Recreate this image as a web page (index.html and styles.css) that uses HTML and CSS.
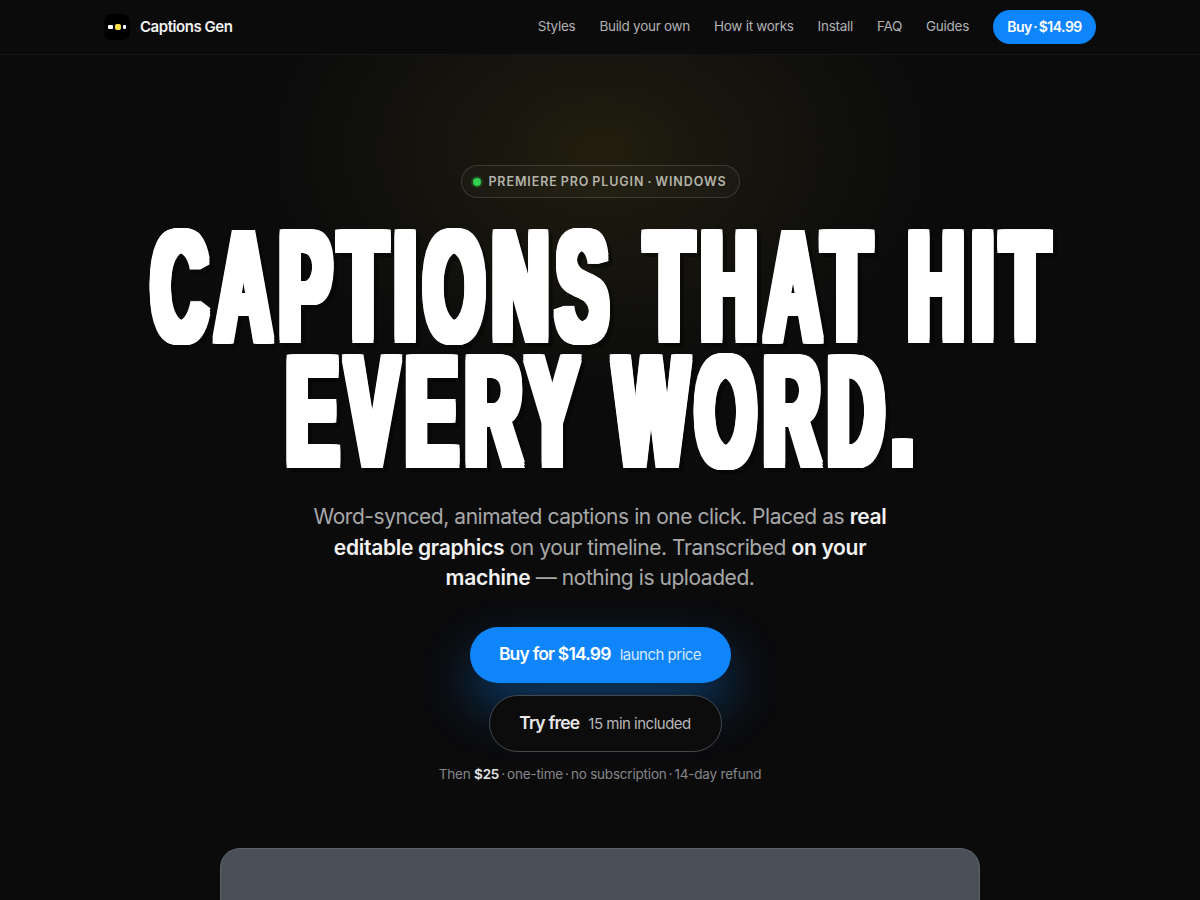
FILE: index.html
```html
<!DOCTYPE html>
<html lang="en">
<head>
<meta charset="utf-8">
<title>Captions Gen</title>
<link rel="stylesheet" href="styles.css">
</head>
<body>
<header class="nav">
  <div class="nav-inner">
    <a class="brand" href="#">
      <span class="logo"><i class="dot"></i><i class="dot yellow"></i><i class="dot small"></i></span>
      <span class="brand-name">Captions Gen</span>
    </a>
    <nav class="links">
      <a href="#">Styles</a>
      <a href="#">Build your own</a>
      <a href="#">How it works</a>
      <a href="#">Install</a>
      <a href="#">FAQ</a>
      <a href="#">Guides</a>
      <a class="nav-buy" href="#">Buy · $14.99</a>
    </nav>
  </div>
</header>
<main class="hero">
  <div class="badge"><span class="pulse"></span>PREMIERE PRO PLUGIN · WINDOWS</div>
  <h1 class="title">
    <span class="line"><span class="ink">CAPTIONS THAT HIT</span></span>
    <span class="line"><span class="ink">EVERY WORD.</span></span>
  </h1>
  <p class="lede">Word-synced, animated captions in one click. Placed as <b>real editable graphics</b> on your timeline. Transcribed <b>on your machine</b> — nothing is uploaded.</p>
  <div class="cta">
    <a class="btn primary" href="#"><strong>Buy for $14.99</strong><span>launch price</span></a>
    <a class="btn ghost" href="#"><strong>Try free</strong><span>15 min included</span></a>
  </div>
  <p class="note">Then <b>$25</b> <i class="sep">·</i> one-time <i class="sep">·</i> no subscription <i class="sep">·</i> 14-day refund</p>
  <div class="panel"></div>
</main>
</body>
</html>
```
FILE: styles.css
```css
* { box-sizing: border-box; }
html, body { margin: 0; height: 100%; }
body {
  height: 900px;
  overflow: hidden;
  background:
    radial-gradient(ellipse 340px 240px at 600px 150px, rgba(125,110,25,.2), rgba(125,110,25,.09) 45%, rgba(125,110,25,0) 100%),
    #0b0b0c;
  color: #fff;
  font-family: Inter, "Liberation Sans", sans-serif;
}
a { color: inherit; text-decoration: none; }
.nav { height: 55px; border-bottom: 1px solid #151716; background: #0b0b0c; }
.nav-inner {
  width: 992px; height: 54px; margin: 0 auto;
  display: flex; align-items: center; justify-content: space-between;
}
.brand { display: flex; align-items: center; gap: 10px; }
.logo {
  width: 26px; height: 26px; border-radius: 7px; background: #000;
  display: flex; align-items: center; justify-content: center; gap: 2px;
}
.dot { width: 5.5px; height: 3.5px; border-radius: 1px; background: #fff; }
.dot.yellow { height: 5.5px; border-radius: 2px; background: #ffe14a; }
.dot.small { width: 3.5px; }
.brand-name { padding-bottom: 2px; font-size: 15px; font-weight: 600; letter-spacing: -.45px; color: #f2f2f2; }
.links { display: flex; align-items: center; gap: 24px; font-size: 13.5px; color: #b0b2b3; letter-spacing: -.28px; }
.links a { padding-bottom: 2px; }
.links .nav-buy {
  padding-bottom: 1px;
  height: 34px; width: 103px; border-radius: 17px; background: #0f85fb; color: #fff;
  display: flex; align-items: center; justify-content: center;
  font-size: 14px; font-weight: 600; letter-spacing: -.5px; word-spacing: -1.5px;
}
.hero { display: flex; flex-direction: column; align-items: center; padding-top: 110px; }
.badge {
  height: 33px; width: 279px; border: 1px solid rgba(255,255,255,.14); border-radius: 17px;
  background: rgba(255,255,255,.025);
  display: flex; align-items: center; justify-content: center; gap: 7px;
  font-size: 12.5px; font-weight: 600; letter-spacing: .9px; word-spacing: -1px; color: #b4b3aa;
}
.pulse { width: 8px; height: 8px; border-radius: 50%; background: #2fd04f; box-shadow: 0 0 0 2px rgba(47,208,79,.22); }
.title {
  margin: 22px 0 0; width: 100%; font-size: 155px; font-weight: 700; line-height: 125px;
  font-family: "Liberation Sans", sans-serif;
  filter: drop-shadow(4px 4px 0 rgba(0,0,0,.35));
}
.line { display: flex; justify-content: center; height: 125px; white-space: nowrap; padding: 4px 0 0 8px; }
.ink {
  display: block; transform: scaleX(.5); color: #fff; letter-spacing: 16px;
  text-shadow:
    -10px 0 #fff, -8px 0 #fff, -6px 0 #fff, -4px 0 #fff, -2px 0 #fff, 2px 0 #fff, 4px 0 #fff, 6px 0 #fff, 8px 0 #fff, 10px 0 #fff,
    -10px -3px #fff, -8px -3px #fff, -6px -3px #fff, -4px -3px #fff, -2px -3px #fff, 0 -3px #fff, 2px -3px #fff, 4px -3px #fff, 6px -3px #fff, 8px -3px #fff, 10px -3px #fff,
    -10px 3px #fff, -8px 3px #fff, -6px 3px #fff, -4px 3px #fff, -2px 3px #fff, 0 3px #fff, 2px 3px #fff, 4px 3px #fff, 6px 3px #fff, 8px 3px #fff, 10px 3px #fff;
}
.lede {
  margin: 32px 0 0; width: 590px; text-align: center; font-size: 21px; line-height: 30.5px;
  color: #a8a9a9; letter-spacing: -.45px;
}
.lede b { color: #f2f2f2; font-weight: 600; letter-spacing: -.3px; }
.cta { display: flex; flex-direction: column; align-items: center; gap: 12px; margin-top: 33px; }
.btn { display: flex; align-items: baseline; justify-content: center; gap: 9px; border-radius: 29px; }
.btn strong { font-size: 17.5px; font-weight: 600; letter-spacing: -.8px; }
.btn span { font-size: 15px; letter-spacing: -.5px; }
.primary {
  width: 261px; height: 56px; padding-top: 16px; background: #0f85fb;
  box-shadow: 0 24px 50px rgba(15,133,251,.38);
}
.primary span { color: #d4e8fd; }
.ghost {
  width: 233px; height: 57px; margin-left: 10px; padding-top: 16px; background: #0c0c0d; border: 1px solid #44494f;
  color: #e8e8e8;
}
.ghost span { color: #b8b8b8; }
.note { margin: 12px 0 0; font-size: 13.5px; line-height: 20px; color: #85878a; letter-spacing: -.2px; }
.note b { color: #e5e5e5; font-weight: 600; }
.sep { font-style: normal; margin: 0 -1.5px; }
.panel {
  width: 760px; height: 52px; margin-top: 64px; flex: none;
  border-radius: 20px 20px 0 0; border: 1px solid #5d6268; border-bottom: 0; background: #4a5058;
}
```
